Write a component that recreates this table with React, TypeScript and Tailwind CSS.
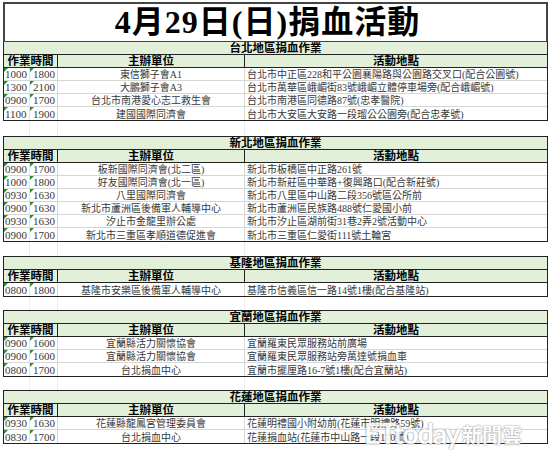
const sections = [
  {
    title: '台北地區捐血作業',
    rows: [
      ['1000', '1800', '東信獅子會A1', '台北市中正區228和平公園襄陽路與公園路交叉口(配合公園號)'],
      ['1300', '2100', '大鵬獅子會A3', '台北市萬華區峨嵋街83號峨嵋立體停車場旁(配合峨嵋號)'],
      ['0900', '1700', '台北市南港愛心志工救生會', '台北市南港區同德路87號(忠孝醫院)'],
      ['1100', '1900', '建國國際同濟會', '台北市大安區大安路一段瑠公公園旁(配合忠孝號)']
    ]
  },
  {
    title: '新北地區捐血作業',
    rows: [
      ['0900', '1700', '板新國際同濟會(北二區)', '新北市板橋區中正路261號'],
      ['1000', '1800', '好友國際同濟會(北一區)', '新北市新莊區中華路+復興路口(配合新莊號)'],
      ['0930', '1630', '八里國際同濟會', '新北市八里區中山路二段356號區公所前'],
      ['0900', '1630', '新北市蘆洲區後備軍人輔導中心', '新北市蘆洲區民族路488號仁愛國小前'],
      ['0930', '1630', '汐止市金龍里辦公處', '新北市汐止區湖前街31巷2弄2號活動中心'],
      ['0900', '1700', '新北市三重區孝順道德促進會', '新北市三重區仁愛街111號土輪宮']
    ]
  },
  {
    title: '基隆地區捐血作業',
    rows: [['0800', '1800', '基隆市安樂區後備軍人輔導中心', '基隆市信義區信一路14號1樓(配合基隆站)']]
  },
  {
    title: '宜蘭地區捐血作業',
    rows: [
      ['0900', '1600', '宜蘭縣活力關懷協會', '宜蘭羅東民眾服務站前廣場'],
      ['0900', '1600', '宜蘭縣活力關懷協會', '宜蘭羅東民眾服務站旁萬達號捐血車'],
      ['0800', '1700', '台北捐血中心', '宜蘭市擺厘路16-7號1樓(配合宜蘭站)']
    ]
  },
  {
    title: '花蓮地區捐血作業',
    rows: [
      ['0930', '1630', '花蓮縣龍鳳宮管理委員會', '花蓮明禮國小附幼前(花蓮市明禮路59號)'],
      ['0830', '1700', '台北捐血中心', '花蓮捐血站(花蓮市中山路一段170號)']
    ]
  }
]

const gaps = [15, 14, 13, 13]

function Flag() {
  return (
    <span className="absolute left-0 top-0 border-t-[4px] border-r-[4px] border-t-[#2e8b3a] border-r-transparent" />
  )
}

function Gap({ h }: { h: number }) {
  return (
    <div className="flex" style={{ height: h }}>
      <div className="w-[27px] border-r border-[#ececec]" />
      <div className="w-[28px] border-r border-[#ececec]" />
      <div className="w-[187px] border-r border-[#ececec]" />
      <div className="flex-1" />
    </div>
  )
}

function Section({ title, rows, first }: { title: string; rows: string[][]; first?: boolean }) {
  return (
    <div className={`border border-[#222] ${first ? 'border-t-0' : ''}`}>
      <div className="h-[13px] bg-[#e2efd9] border-b border-[#222] flex items-end justify-center text-[11.5px] leading-[12px] font-bold text-black">
        {title}
      </div>
      <div className="h-[13px] bg-[#e2efd9] border-b border-[#222] flex text-[11.5px] leading-[12px] font-bold text-black">
        <div className="w-[54px] border-r border-[#222] flex items-end justify-center">作業時間</div>
        <div className="w-[187px] border-r border-[#222] flex items-end justify-center">主辦單位</div>
        <div className="flex-1 flex items-end justify-center">活動地點</div>
      </div>
      {rows.map((r, i) => (
        <div
          key={i}
          className={`h-[13px] flex text-[10px] leading-[11px] text-[#383838] ${i < rows.length - 1 ? 'border-b border-[#d6d6d6]' : ''}`}
        >
          <div className="relative w-[26px] border-r border-[#e4e4e4] flex items-end pl-[1px] text-[11px]">
            <Flag />
            {r[0]}
          </div>
          <div className="relative w-[28px] border-r border-[#d6d6d6] flex items-end pl-[3px] text-[11px]">
            <Flag />
            {r[1]}
          </div>
          <div className="w-[187px] border-r border-[#d6d6d6] flex items-end justify-center whitespace-nowrap">
            {r[2]}
          </div>
          <div className="flex-1 flex items-end pl-[2px] whitespace-nowrap">{r[3]}</div>
        </div>
      ))}
    </div>
  )
}

export default function App() {
  return (
    <div className="relative w-[551px] h-[450px] overflow-hidden bg-white font-['Liberation_Serif','Noto_Sans_CJK_TC',serif]">
      <div className="ml-[3px] mt-[2px] w-[545px]">
        <div className="h-[40px] border-2 border-b border-[#444] flex items-end justify-center pb-[1px] pr-[16px]">
          <span className="text-[32px] leading-[36px] font-bold text-black tracking-[1px]">4月29日(日)捐血活動</span>
        </div>
        {sections.map((s, i) => (
          <div key={s.title}>
            {i > 0 && <Gap h={gaps[i - 1]} />}
            <Section title={s.title} rows={s.rows} first={i === 0} />
          </div>
        ))}
      </div>

      <div className="absolute left-[364px] top-[418px] flex items-end text-white font-['Lato','Noto_Sans_CJK_TC',sans-serif] [text-shadow:0_0_1px_#777,0_0_2px_#999] opacity-85">
        <span className="text-[29px] font-bold leading-none tracking-[-1.5px]">ETtoday</span>
        <span className="text-[20px] font-bold leading-none ml-[3px] mb-[2px]">新聞雲</span>
      </div>
    </div>
  )
}
